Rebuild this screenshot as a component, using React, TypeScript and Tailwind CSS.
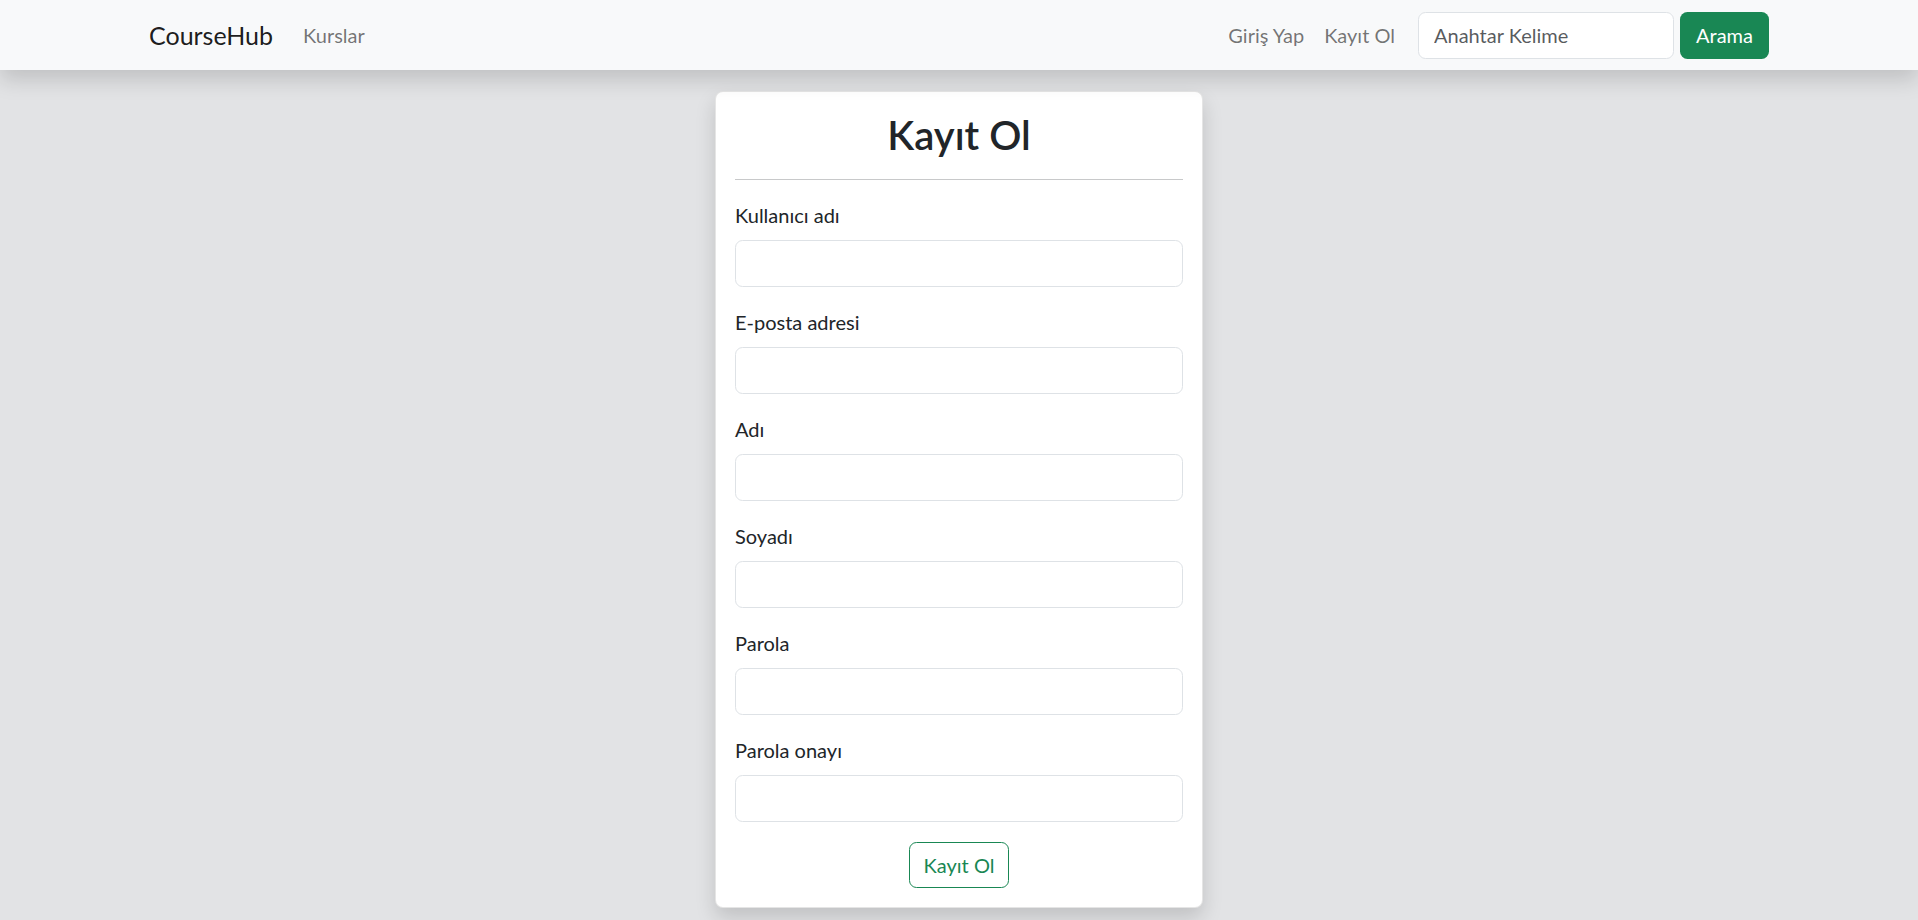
const fields = [
  { label: 'Kullanıcı adı', type: 'text' },
  { label: 'E-posta adresi', type: 'email' },
  { label: 'Adı', type: 'text' },
  { label: 'Soyadı', type: 'text' },
  { label: 'Parola', type: 'password' },
  { label: 'Parola onayı', type: 'password' },
];

function Navbar() {
  return (
    <nav className="relative z-10 h-[70px] bg-[#f8f9fa] shadow-[0_10px_20px_rgba(0,0,0,0.15)]">
      <div className="mx-auto flex h-full w-[1620px] items-center">
        <a href="#" className="mr-[20px] text-[25px] leading-[30px] text-black/90">
          CourseHub
        </a>
        <a href="#" className="px-[10px] text-[20px] leading-[30px] text-black/55">
          Kurslar
        </a>

        <div className="ml-auto flex items-center">
          <a href="#" className="px-[10px] text-[20px] leading-[30px] text-black/55">
            Giriş Yap
          </a>
          <a href="#" className="px-[10px] text-[20px] leading-[30px] text-black/55">
            Kayıt Ol
          </a>
          <form className="ml-[13px] flex items-center gap-[6px]" onSubmit={(e) => e.preventDefault()}>
            <input
              type="search"
              placeholder="Anahtar Kelime"
              className="h-[47px] w-[256px] rounded-[7.5px] border border-[#dee2e6] bg-white px-[15px] text-[20px] text-[#212529] outline-none placeholder:text-[#212529]/75"
            />
            <button
              type="submit"
              className="h-[47px] w-[89px] rounded-[7.5px] bg-[#198754] text-[20px] text-white"
            >
              Arama
            </button>
          </form>
        </div>
      </div>
    </nav>
  );
}

export default function App() {
  return (
    <div className="min-h-screen bg-[#e2e3e5] font-['Lato',sans-serif] text-[#212529]">
      <Navbar />

      <div className="mx-auto mt-[21px] w-[488px] rounded-[8px] border border-black/10 bg-white p-[19px] shadow-[0_10px_20px_rgba(0,0,0,0.15)]">
        <h1 className="h-[48px] text-center text-[40px] leading-[48px] font-semibold">Kayıt Ol</h1>
        <hr className="mt-[20px] mb-[20px] border-t border-[#c8c9ca]" />

        <form onSubmit={(e) => e.preventDefault()}>
          {fields.map((f) => (
            <div key={f.label} className="mb-[20px]">
              <label className="mb-[10px] block h-[30px] text-[20px] leading-[30px]">{f.label}</label>
              <input
                type={f.type}
                className="block h-[47px] w-full rounded-[7.5px] border border-[#dee2e6] bg-white px-[15px] text-[20px] outline-none"
              />
            </div>
          ))}

          <div className="flex justify-center">
            <button
              type="submit"
              className="h-[46px] w-[100px] rounded-[7.5px] border border-[#198754] text-[20px] text-[#198754]"
            >
              Kayıt Ol
            </button>
          </div>
        </form>
      </div>
    </div>
  );
}
